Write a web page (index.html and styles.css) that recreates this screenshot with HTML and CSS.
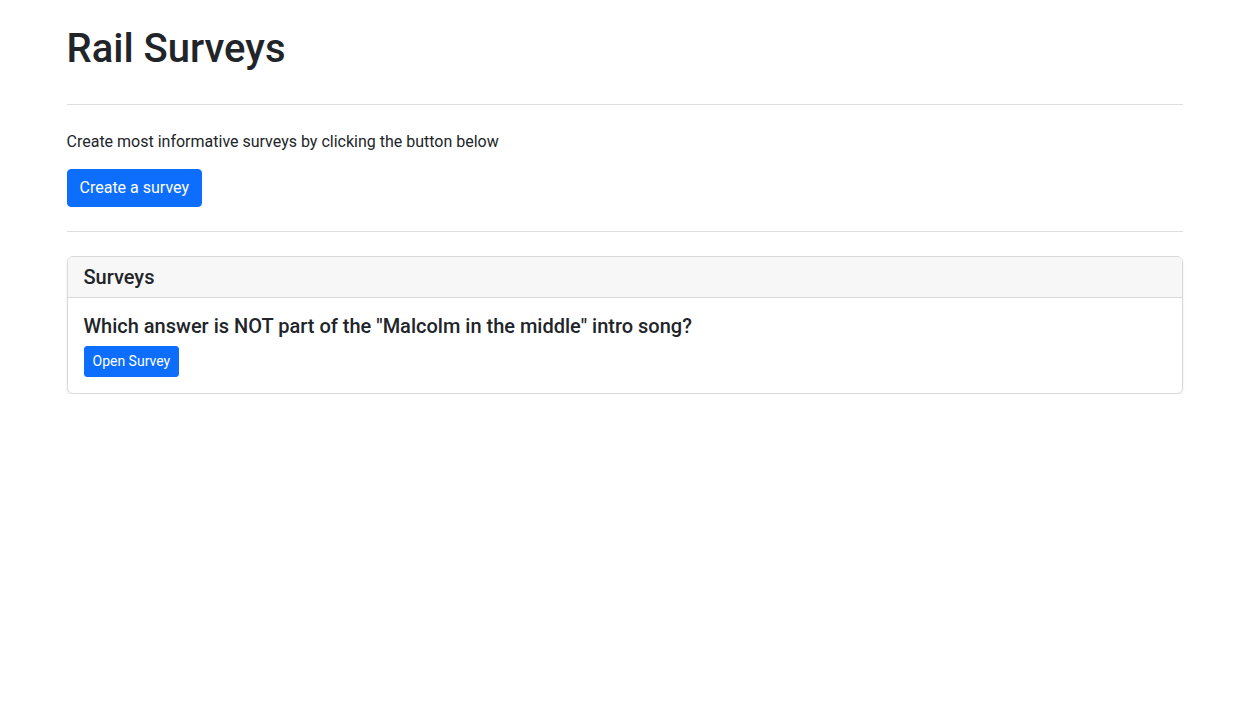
FILE: index.html
```html
<!DOCTYPE html>
<html lang="en">
<head>
<meta charset="utf-8">
<title>Rail Surveys</title>
<link rel="stylesheet" href="styles.css">
</head>
<body>
<main class="container">
  <h1 class="title">Rail Surveys</h1>
  <hr class="divider divider-top">
  <p class="lead-text">Create most informative surveys by clicking the button below</p>
  <a class="btn btn-primary" href="#">Create a survey</a>
  <hr class="divider divider-mid">
  <section class="card">
    <div class="card-header">Surveys</div>
    <div class="card-body">
      <h5 class="card-title">Which answer is NOT part of the "Malcolm in the middle" intro song?</h5>
      <a class="btn btn-primary btn-sm" href="#">Open Survey</a>
    </div>
  </section>
</main>
</body>
</html>
```
FILE: styles.css
```css
* { box-sizing: border-box; }
html, body { margin: 0; padding: 0; }
body {
  font-family: Roboto, "Liberation Sans", Arial, sans-serif;
  font-size: 16px;
  line-height: 1.5;
  color: #212529;
  background: #fff;
}
.container {
  max-width: 1140px;
  margin: 0 auto;
  padding: 25px 12px 0;
}
.title {
  margin: 0;
  font-size: 40px;
  font-weight: 500;
  line-height: 1.2;
}
.divider {
  border: 0;
  border-top: 1px solid #dedede;
  height: 0;
}
.divider-top { margin: 31px 0 25px; }
.divider-mid { margin: 24px 0 24px; }
.lead-text { margin: 0 0 15px; }
.btn {
  display: inline-block;
  padding: 6px 12px;
  font-size: 16px;
  line-height: 24px;
  border: 1px solid transparent;
  border-radius: 4px;
  text-decoration: none;
  vertical-align: top;
}
.btn-primary {
  color: #fff;
  background: #0d6efd;
  border-color: #0d6efd;
}
.btn-sm {
  padding: 4px 8px;
  font-size: 14px;
  line-height: 21px;
  border-radius: 3px;
}
.card {
  border: 1px solid #d9d9d9;
  border-radius: 6px;
  box-shadow: 0 2px 3px rgba(0,0,0,0.08);
  overflow: hidden;
}
.card-header {
  padding: 8px 16px;
  background: #f7f7f7;
  border-bottom: 1px solid #d9d9d9;
  font-size: 20px;
  font-weight: 500;
  line-height: 24px;
}
.card-body {
  padding: 16px;
}
.card-title {
  margin: 0 0 8px;
  font-size: 20px;
  font-weight: 500;
  line-height: 24px;
}
```
